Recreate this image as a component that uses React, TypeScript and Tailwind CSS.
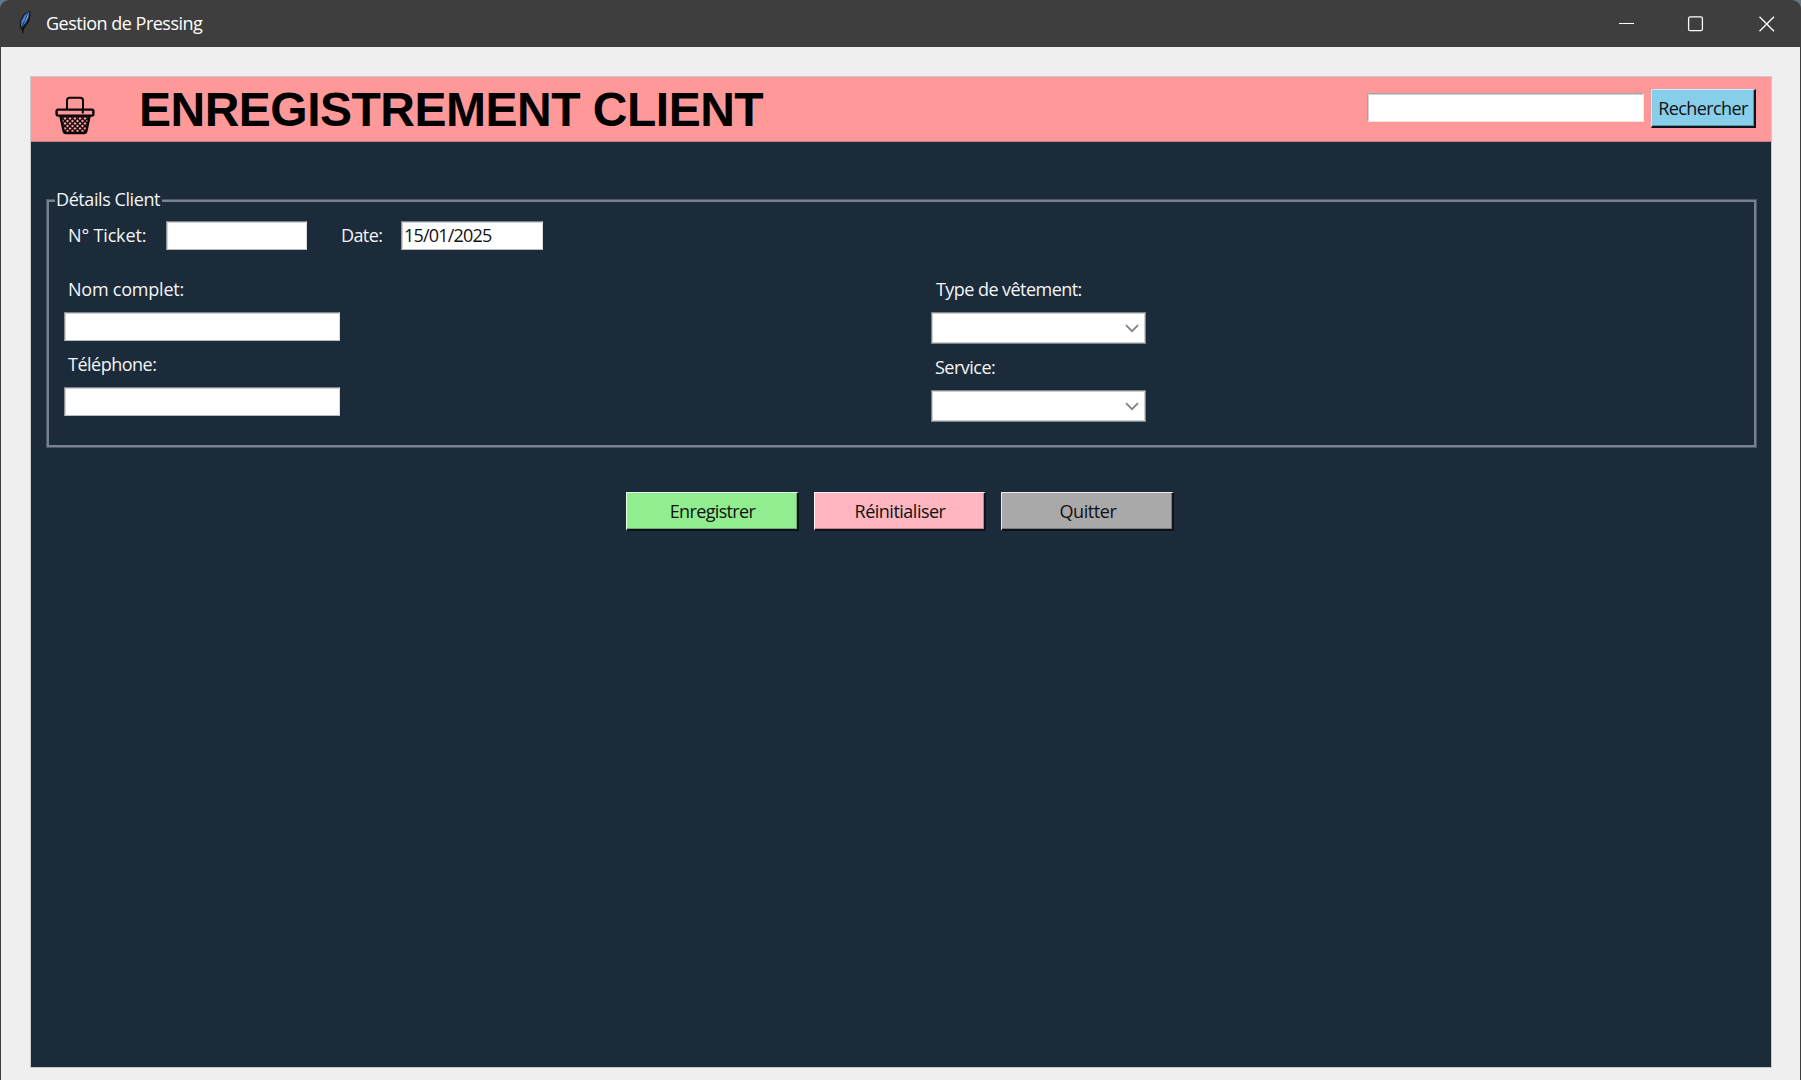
import React from "react";
import clsx from "clsx";

const Feather = () => (
  <svg width="16" height="26" viewBox="0 0 16 26" className="mt-[-2px] shrink-0">
    <path d="M4.6 23.5L4 20.5L1.8 17L2.3 10L6 4L12.2.8L12.6 5L11 12L6 19L5.4 23.5Z" fill="#141414" />
    <path d="M3 16.5L3.4 10.5L7 4.6L11.4 2L10.4 7.5L8 12.5L4.4 16.8Z" fill="#3f7fd6" />
    <path d="M6 10L10.6 2.6L9.6 7.5L6.2 13Z" fill="#8fbdf2" />
    <path d="M9.8 3.5L4 17" stroke="#1c2e4c" strokeWidth="1" fill="none" />
  </svg>
);

const Basket = () => (
  <svg width="40" height="40" viewBox="0 0 40 40" className="shrink-0" fill="none" stroke="#0b0708">
    <defs>
      <pattern id="weave" width="5" height="5" patternUnits="userSpaceOnUse">
        <rect width="5" height="5" fill="#ff9999" stroke="none" />
        <path d="M0 0L5 5M5 0L0 5" stroke="#0b0708" strokeWidth="1.35" />
      </pattern>
    </defs>
    <path d="M12 14V4.5Q12 1.8 14.7 1.8H25.3Q28 1.8 28 4.5V16" strokeWidth="2" />
    <path d="M5.3 19.5L8.6 35Q9 37 11 37H29Q31 37 31.4 35L34.7 19.5Z" fill="url(#weave)" strokeWidth="2.4" />
    <rect x="1.6" y="13.6" width="36.8" height="6" rx="1.5" fill="#ff9999" strokeWidth="2.4" />
    <path d="M27.8 13V17.5" strokeWidth="2" />
  </svg>
);

const Label = ({ children, className }: { children: React.ReactNode; className?: string }) => (
  <span className={clsx("block h-6 text-[18px] leading-6 whitespace-pre", className)}>{children}</span>
);

const sunken = "border-t-[#7c848c] border-l-[#8c9399] border-r-[#d9dbdd] border-b-[#b9bdc1]";

const Entry = ({ className, edges = sunken, children }: { className: string; edges?: string; children?: React.ReactNode }) => (
  <div className={clsx("shrink-0 border bg-white pl-[2px] text-[#111] shadow-[inset_1px_1px_0_#d2d2d2]", edges, className)}>
    {children}
  </div>
);

const Combo = () => (
  <div className="flex h-8 w-[215px] items-center justify-end border border-[#7d858c] bg-white pr-[6px] shadow-[inset_0_0_0_1px_#cfcfcf]">
    <svg width="14" height="9" viewBox="0 0 14 9" fill="none" stroke="#808080" strokeWidth="1.7">
      <path d="M1 1.2L7 7.2L13 1.2" />
    </svg>
  </div>
);

const Button = ({ className, text, children }: { className: string; text: string; children: React.ReactNode }) => (
  <button
    className={clsx(
      "flex h-[39px] shrink-0 items-center justify-center border-t border-r-2 border-b-2 border-l border-r-[#0d1319] border-b-[#0d1319] text-[18px] leading-6 text-[#111]",
      className,
    )}
  >
    <span className={text}>{children}</span>
  </button>
);

export default function App() {
  return (
    <div className="flex h-[1080px] w-[1801px] flex-col overflow-hidden bg-[#64788a] font-['Open_Sans',sans-serif]">
      <header className="flex h-[47px] shrink-0 items-center rounded-t-[9px] bg-[#3e3e3e] pr-[26px] pl-[18px] text-white">
        <Feather />
        <span className="mt-[-1px] ml-[12px] text-[18px] leading-6 tracking-[-0.5px]">Gestion de Pressing</span>
        <svg className="ml-auto" width="156" height="16" viewBox="0 0 156 16" fill="none" stroke="#fff" strokeWidth="1.3">
          <path d="M0 7.5H15" strokeWidth="1" />
          <rect x="69.6" y="0.9" width="13.8" height="13.8" rx="1.5" />
          <path d="M140.5 .8L155 15.2M155 .8L140.5 15.2" />
        </svg>
      </header>

      <main className="flex grow flex-col border-x border-[#3e3e3e] bg-[#efefef] px-[30px] pt-[30px]">
        <section className="flex h-[990px] w-[1740px] flex-col bg-[#1b2b3a] shadow-[0_0_0_1px_#c5cace]">
          <div className="flex h-[64px] shrink-0 items-center border-b border-[#c87c80] bg-[#ff9999] pr-[15px] pl-[24px] box-content w-[1701px]">
            <div className="mt-[14px]">
              <Basket />
            </div>
            <h1 className="mt-[2px] ml-[44px] font-['Liberation_Sans',sans-serif] text-[48px] leading-[54px] font-bold tracking-[-0.5px] whitespace-nowrap text-black">
              ENREGISTREMENT CLIENT
            </h1>
            <Entry
              className="mt-[-3px] ml-auto h-[29px] w-[277px]"
              edges="border-t-[#a9a3a3] border-l-[#a9a3a3] border-r-[#ffe6e6] border-b-[#ffe6e6]"
            />
            <Button
              className="mt-[-1px] ml-[7px] w-[105px] border-t-[#bdf0f7] border-l-[#c5f2fa] bg-[#87ceeb] shadow-[inset_-1px_-1px_0_#5f93a9]"
              text="tracking-[-0.6px]"
            >
              Rechercher
            </Button>
          </div>

          <div className="relative mt-[57px] ml-[15px] flex h-[249px] w-[1711px] shrink-0 border border-[#4c5966] pt-[21px] pl-[17px] text-[#f3f5f6] shadow-[inset_0_0_0_2px_#78828e]">
            <div className="absolute -top-[13px] left-[8px] h-6 w-[107px] bg-[#1b2b3a] pl-px">
              <Label className="tracking-[-0.42px]">Détails Client</Label>
            </div>
            <div className="w-[867px]">
              <div className="flex items-start">
                <Label className="mt-[2px] ml-[4px] w-[98px] shrink-0 tracking-[-0.15px]">N° Ticket:</Label>
                <Entry className="h-[29px] w-[141px]" />
                <Label className="mt-[2px] ml-[34px] w-[60px] shrink-0 tracking-[-0.6px]">Date:</Label>
                <Entry className="h-[29px] w-[142px]">
                  <Label className="mt-px tracking-[-0.8px]">15/01/2025</Label>
                </Entry>
              </div>
              <Label className="mt-[27px] ml-[4px] tracking-[-0.22px]">Nom complet:</Label>
              <Entry className="mt-[11px] h-[29px] w-[276px]" />
              <Label className="mt-[11px] ml-[4px] tracking-[-0.5px]">Téléphone:</Label>
              <Entry className="mt-[11px] h-[29px] w-[276px]" />
            </div>
            <div className="pt-[56px]">
              <Label className="ml-[5px] tracking-[-0.55px]">Type de vêtement:</Label>
              <div className="mt-[11px]">
                <Combo />
              </div>
              <Label className="mt-[11px] ml-[4px] tracking-[-0.5px]">Service:</Label>
              <div className="mt-[11px]">
                <Combo />
              </div>
            </div>
          </div>

          <div className="mt-[44px] flex gap-[15px] pl-[595px]">
            <Button className="w-[173px] border-t-[#e8fbe8] border-l-[#e8fbe8] bg-[#90ee90] shadow-[inset_-1px_-1px_0_#6fae72]" text="pl-px tracking-[-0.65px]">
              Enregistrer
            </Button>
            <Button className="w-[172px] border-t-[#fff0f2] border-l-[#fff0f2] bg-[#ffb6c1] shadow-[inset_-1px_-1px_0_#b98790]" text="pl-px tracking-[-0.5px]">
              Réinitialiser
            </Button>
            <Button className="w-[173px] border-t-[#ececec] border-l-[#ececec] bg-[#a9a9a9] shadow-[inset_-1px_-1px_0_#7c7c7c]" text="pl-[2px] tracking-[-0.4px]">
              Quitter
            </Button>
          </div>
        </section>
      </main>
    </div>
  );
}
